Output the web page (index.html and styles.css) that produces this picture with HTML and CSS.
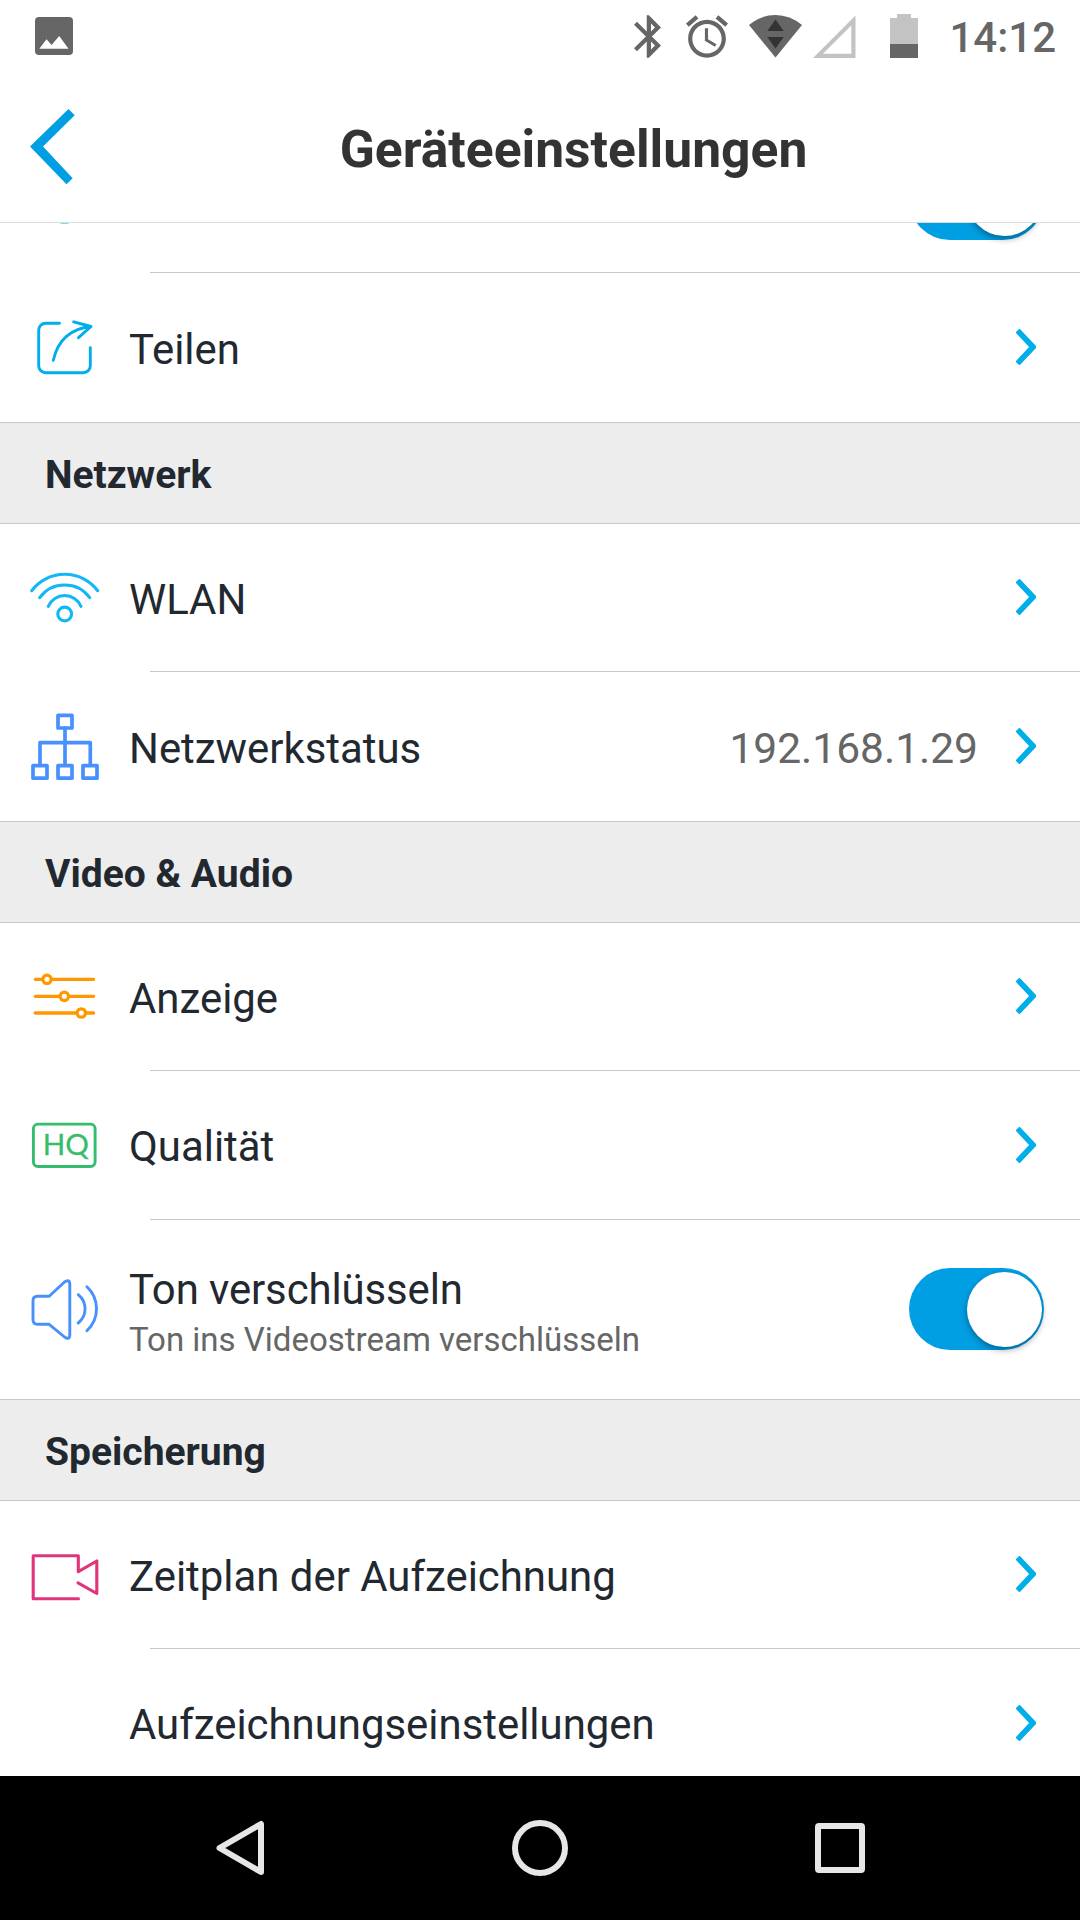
FILE: index.html
```html
<!DOCTYPE html>
<html lang="de">
<head>
    <meta charset="UTF-8">
    <meta name="viewport" content="width=device-width, initial-scale=1.0">
    <title>Geräteeinstellungen</title>
    <link rel="stylesheet" href="styles.css">
</head>
<body>

    <div class="status-bar">
        <svg class="status-photo" width="38" height="38" viewBox="0 0 38 38">
            <rect width="38" height="38" rx="4" fill="#666"/>
            <path d="M4.3 31.7L11.5 22.3L16.6 28L24.2 19L33.5 31.7Z" fill="#fff"/>
        </svg>
        <svg class="status-bluetooth" width="27" height="43" viewBox="5 2 12.71 20">
            <path fill="#666" d="M17.71 7.71L12 2h-1v7.59L6.41 5 5 6.41 10.59 12 5 17.59 6.41 19 11 14.41V22h1l5.71-5.71-4.3-4.29 4.3-4.29zM13 5.83l1.88 1.88L13 9.59V5.83zm1.88 10.46L13 18.17v-3.76l1.88 1.88z"/>
        </svg>
        <svg class="status-alarm" width="42" height="43" viewBox="2 1.86 20 20.14">
            <path fill="#666" d="M22 5.72l-4.6-3.86-1.29 1.53 4.6 3.86L22 5.72zM7.88 3.39L6.6 1.86 2 5.71l1.29 1.53 4.59-3.85zM12.5 8H11v6l4.75 2.85.75-1.23-4-2.37V8zM12 4c-4.97 0-9 4.03-9 9s4.02 9 9 9c4.97 0 9-4.03 9-9s-4.03-9-9-9zm0 16c-3.87 0-7-3.13-7-7s3.13-7 7-7 7 3.13 7 7-3.13 7-7 7z"/>
        </svg>
        <svg class="status-wifi" width="53" height="43" viewBox="0 0 53 43">
            <path fill="#666" d="M0 10Q12 0 26.5 0T53 10L26.5 42.5Z"/>
            <path fill="#333" d="M26.5 4.5L34.7 16H18.3ZM18.3 22H34.7L26.5 33.5Z"/>
        </svg>
        <svg class="status-signal" width="43" height="43" viewBox="0 0 43 43">
            <path fill="#c3c3c3" fill-rule="evenodd" d="M0 43L42.5 .5V43ZM10 38.7H38.3V10.4Z"/>
        </svg>
        <svg class="status-battery" width="28" height="44" viewBox="0 0 28 44">
            <path fill="#c3c3c3" d="M7 0H21V4H28V30H0V4H7Z"/>
            <rect y="30" width="28" height="14" fill="#666"/>
        </svg>
        <span class="status-time">14:12</span>
    </div>

    <div class="header">
        <svg class="back" width="45" height="76" viewBox="0 0 45 76">
            <path fill="#009ee3" d="M0 37.4L38.5 0L44.7 6.3L13 37.4L42.7 69.3L36.5 75.3Z"/>
        </svg>
        <h1>Geräteeinstellungen</h1>
    </div>

    <div class="settings">
        <!-- scrolled partly under the header -->
        <div class="row row-scrolled">
            <svg class="icon" viewBox="0 0 71 71">
                <circle cx="35.5" cy="35.5" r="24.8" fill="none" stroke="#00aeea" stroke-width="2.4"/>
            </svg>
            <div class="label"></div>
            <div class="toggle"><div class="knob"></div></div>
        </div>
        <div class="divider"></div>
        <div class="row">
            <svg class="icon share" viewBox="0 0 71 71">
                <path d="M30.5 11.2H16.7a7 7 0 0 0-7 7V53.7a7 7 0 0 0 7 7H54.3a7 7 0 0 0 7-7V35.8"/>
                <path d="M24.3 48.3C28 32 38 17 62 14.5M44.7 9.8L62 14.5L49.5 25.7"/>
            </svg>
            <div class="label">Teilen</div>
            <svg class="chevron" viewBox="0 0 20 36"><path d="M1.5 1.5L17 18L1.5 34.5"/></svg>
        </div>

        <h2>Netzwerk</h2>
        <div class="row row-short">
            <svg class="icon wifi" viewBox="0 0 71 71">
                <path d="M2.7 28.7A41.4 41.4 0 0 1 68.7 28.7M10.7 35.7A31 31 0 0 1 60.7 35.7M19.3 44.3A17.8 17.8 0 0 1 52 44.3"/>
                <circle cx="35.7" cy="52" r="6.9"/>
            </svg>
            <div class="label">WLAN</div>
            <svg class="chevron" viewBox="0 0 20 36"><path d="M1.5 1.5L17 18L1.5 34.5"/></svg>
        </div>
        <div class="divider"></div>
        <div class="row">
            <svg class="icon network" viewBox="0 0 71 71">
                <rect x="29" y="4.3" width="14" height="12.7"/>
                <rect x="4" y="54.6" width="14" height="12.6"/>
                <rect x="29" y="54.6" width="14" height="12.6"/>
                <rect x="54" y="54.6" width="14" height="12.6"/>
                <path d="M36 17V54M11 54V31.7H61.3V54"/>
            </svg>
            <div class="label">Netzwerkstatus</div>
            <div class="value">192.168.1.29</div>
            <svg class="chevron" viewBox="0 0 20 36"><path d="M1.5 1.5L17 18L1.5 34.5"/></svg>
        </div>

        <h2>Video &amp; Audio</h2>
        <div class="row row-short">
            <svg class="icon sliders" viewBox="0 0 71 71">
                <path d="M6.3 18.3H64.6M6.3 35.3H64.6M6.3 52H64.6"/>
                <circle cx="18" cy="18.3" r="4.2"/>
                <circle cx="35.3" cy="35.3" r="4.2"/>
                <circle cx="52.3" cy="52" r="4.2"/>
            </svg>
            <div class="label">Anzeige</div>
            <svg class="chevron" viewBox="0 0 20 36"><path d="M1.5 1.5L17 18L1.5 34.5"/></svg>
        </div>
        <div class="divider"></div>
        <div class="row row-medium">
            <svg class="icon quality" viewBox="0 0 71 71">
                <rect x="4.4" y="14.1" width="61.7" height="42.4" rx="4.5"/>
                <text x="13.8" y="44.8" textLength="46">HQ</text>
            </svg>
            <div class="label">Qualität</div>
            <svg class="chevron" viewBox="0 0 20 36"><path d="M1.5 1.5L17 18L1.5 34.5"/></svg>
        </div>
        <div class="divider"></div>
        <div class="row row-tall">
            <svg class="icon speaker" viewBox="0 0 71 71">
                <path d="M8.5 22.3H20.2L35.5 8Q40.8 4.5 40.8 10.5V60.5Q40.8 66.5 35.5 63L20.2 50.3H8.5Q4 50.3 4 45.5V27Q4 22.3 8.5 22.3Z"/>
                <path d="M49.2 20.7A18 18 0 0 1 49.2 49M57.9 12.7A30 30 0 0 1 57.9 56.7"/>
            </svg>
            <div class="label">
                Ton verschlüsseln
                <div class="hint">Ton ins Videostream verschlüsseln</div>
            </div>
            <div class="toggle"><div class="knob"></div></div>
        </div>

        <h2>Speicherung</h2>
        <div class="row row-short">
            <svg class="icon camera" viewBox="0 0 71 71">
                <path d="M49.5 59.8H4.2V16.7H49.3V32.7L67.8 22V54.5L49 43.8"/>
            </svg>
            <div class="label">Zeitplan der Aufzeichnung</div>
            <svg class="chevron" viewBox="0 0 20 36"><path d="M1.5 1.5L17 18L1.5 34.5"/></svg>
        </div>
        <div class="divider"></div>
        <div class="row row-medium">
            <div class="icon"></div>
            <div class="label">Aufzeichnungseinstellungen</div>
            <svg class="chevron" viewBox="0 0 20 36"><path d="M1.5 1.5L17 18L1.5 34.5"/></svg>
        </div>
    </div>

    <div class="nav-bar">
        <svg width="56" height="56" viewBox="0 0 56 56"><path d="M49 4V52L7.5 28Z"/></svg>
        <svg width="56" height="56" viewBox="0 0 56 56"><circle cx="28" cy="28" r="25"/></svg>
        <svg width="56" height="56" viewBox="0 0 56 56"><rect x="6" y="6" width="44" height="44" rx="1"/></svg>
    </div>

</body>
</html>
```

FILE: styles.css
```css
* {
    margin: 0;
    padding: 0;
    box-sizing: border-box;
}

body {
    display: flex;
    flex-direction: column;
    width: 1080px;
    height: 1920px;
    overflow: hidden;
    background-color: #fff;
    color: #22282f;
    font-family: Roboto, sans-serif;
}

svg {
    display: block;
    flex: none;
}

/* Status bar */
.status-bar {
    display: flex;
    align-items: center;
    height: 72px;
    padding: 0 24px 0 35px;
    flex: none;
}

.status-bluetooth {
    margin-left: auto;
}

.status-alarm {
    margin-left: 25px;
}

.status-wifi {
    margin-left: 21px;
}

.status-signal {
    margin-left: 11px;
}

.status-battery {
    margin-left: 34px;
}

.status-time {
    margin-left: 31px;
    padding-top: 3px;
    font-size: 42px;
    font-weight: 500;
    line-height: 48px;
    color: #666;
}

/* Title bar */
.header {
    display: flex;
    align-items: center;
    height: 151px;
    padding: 0 8px 0 30px;
    border-bottom: 1px solid #dcdcdc;
    flex: none;
}

.header h1 {
    flex: 1;
    padding-top: 4px;
    text-align: center;
    font-size: 51.6px;
    font-weight: 700;
    color: #333;
}

/* Settings list */
.settings {
    flex: 1;
    min-height: 0;
    overflow: hidden;
}

.settings h2 {
    height: 102px;
    padding: 3px 0 0 45px;
    border-top: 1px solid #c8c8c8;
    border-bottom: 1px solid #c8c8c8;
    background-color: #ededed;
    font-size: 39px;
    font-weight: 700;
    line-height: 98px;
}

.row {
    display: flex;
    align-items: center;
    height: 149px;
    padding: 0 44px 0 29px;
}

.row-short {
    height: 147px;
}

.row-medium {
    height: 148px;
}

.row-tall {
    height: 179px;
    padding-right: 36px;
}

.row-scrolled {
    margin-top: -100px;
    padding-right: 36px;
}

.row-scrolled .toggle {
    margin-top: 3px;
}

.divider {
    height: 1px;
    margin-left: 150px;
    background-color: #c8c8c8;
}

.label {
    flex: 1;
    padding: 4px 0 0 29px;
    font-size: 41.9px;
    line-height: 50px;
}

.row-tall .label {
    padding-top: 11px;
    letter-spacing: -0.1px;
}

.hint {
    font-size: 33px;
    line-height: 50px;
    letter-spacing: 0;
    color: #666;
}

.value {
    padding-top: 4px;
    margin-right: 38px;
    font-size: 42.5px;
    line-height: 50px;
    color: #666;
}

.chevron {
    width: 20px;
    height: 36px;
    margin-bottom: 1px;
    fill: none;
    stroke: #00aeea;
    stroke-width: 5.6;
}

.toggle {
    display: flex;
    justify-content: flex-end;
    align-items: center;
    width: 135px;
    height: 82px;
    margin-bottom: 1px;
    padding-right: 2px;
    border-radius: 41px;
    background-color: #009ee3;
}

.knob {
    width: 75px;
    height: 75px;
    border-radius: 50%;
    background-color: #fff;
    box-shadow: 0 3px 6px rgba(0, 0, 0, 0.35);
}

/* Row icons */
.icon {
    width: 71px;
    height: 71px;
    fill: none;
    stroke-width: 2.9;
    stroke-linecap: round;
    stroke-linejoin: round;
}

.share {
    stroke: #00aeea;
}

.wifi {
    stroke: #12b7f5;
    stroke-width: 3.1;
}

.network {
    stroke: #4890fb;
    stroke-width: 3.7;
}

.sliders {
    stroke: #ff9800;
    stroke-width: 3.3;
}

.sliders circle {
    fill: #fff;
}

.quality {
    stroke: #35bd6b;
}

.quality text {
    fill: #35bd6b;
    stroke-width: 0.3;
    font-family: Lato, sans-serif;
    font-size: 29.5px;
}

.speaker {
    stroke: #4890fb;
}

.camera {
    stroke: #e0357b;
    stroke-width: 3.1;
}

/* Navigation bar */
.nav-bar {
    display: grid;
    grid-template-columns: repeat(3, 300px);
    justify-content: center;
    justify-items: center;
    align-items: center;
    height: 144px;
    background-color: #000;
    flex: none;
}

.nav-bar svg {
    fill: none;
    stroke: #e6e6e6;
    stroke-width: 6;
    stroke-linejoin: round;
}
```
